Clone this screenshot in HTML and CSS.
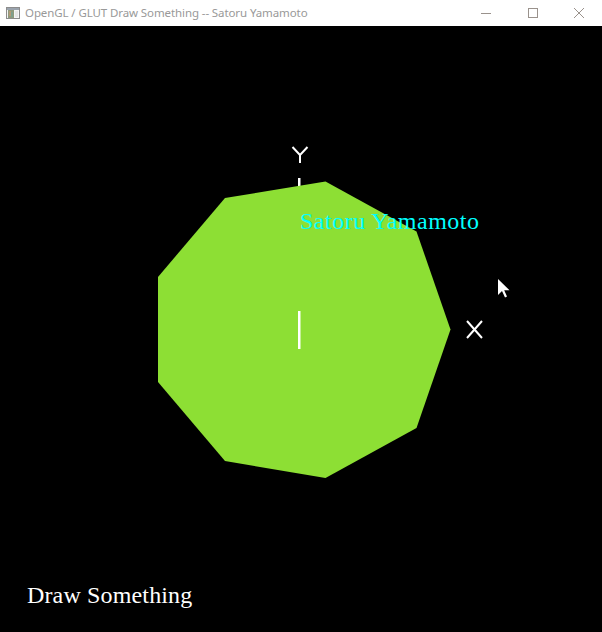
FILE: index.html
```html
<!DOCTYPE html>
<html>
<head>
<meta charset="utf-8">
<link rel="stylesheet" href="styles.css">
</head>
<body>
<div class="window">
  <div class="titlebar">
    <svg class="app-icon" width="14" height="12" viewBox="0 0 14 12">
      <rect x="0.5" y="0.5" width="13" height="11" fill="#f4f4f4" stroke="#8c8c8c"/>
      <rect x="1" y="1" width="12" height="2" fill="#9aa3ad"/>
      <rect x="2" y="3" width="6" height="8" fill="#8f9a7c"/>
      <rect x="3" y="4" width="2" height="5" fill="#b59a78"/>
      <rect x="5" y="5" width="2" height="5" fill="#7f9f8d"/>
      <rect x="9" y="4" width="3" height="6" fill="#e6e6e6"/>
    </svg>
    <span class="title">OpenGL / GLUT Draw Something -- Satoru Yamamoto</span>
    <div class="controls">
      <div class="ctl">
        <svg width="12" height="12" viewBox="0 0 12 12"><line x1="0" y1="6.5" x2="10" y2="6.5" stroke="#9a928c" stroke-width="1"/></svg>
      </div>
      <div class="ctl">
        <svg width="12" height="12" viewBox="0 0 12 12"><rect x="1.5" y="1.5" width="9" height="9" fill="none" stroke="#9a928c" stroke-width="1"/></svg>
      </div>
      <div class="ctl">
        <svg width="12" height="12" viewBox="0 0 12 12"><path d="M1 1 L11 11 M11 1 L1 11" stroke="#9a928c" stroke-width="1"/></svg>
      </div>
    </div>
  </div>
  <div class="canvas">
    <svg class="scene" width="602" height="606" viewBox="0 26 602 606">
      <rect x="298" y="178" width="2.5" height="150" fill="#ffffff"/>
      <polygon fill="#8ddf34" points="325.5,181.5 225,198 158,277 158,382 225,461 325.5,478 416.5,428 450.5,329.5 416.5,231.5"/>
      <rect x="298" y="311" width="2.5" height="38" fill="#ffffff"/>
      <path d="M292.5 147 L300 155 L307.5 147 M300 155 L300 163" stroke="#ffffff" stroke-width="2" fill="none"/>
      <path d="M467 321 L482 338 M482 321 L467 338" stroke="#ffffff" stroke-width="2" fill="none"/>
      <text class="label-name" x="300" y="229">Satoru Yamamoto</text>
      <text class="label-title" x="27" y="603">Draw Something</text>
      <path d="M498 279 L498 295 L502 291 L505 297.5 L507 296.5 L504.2 290.2 L509.5 290.2 Z" fill="#ffffff"/>
    </svg>
  </div>
</div>
</body>
</html>
```

FILE: styles.css
```css
html, body {
  margin: 0;
  padding: 0;
  background: #000000;
}

.window {
  width: 602px;
  height: 632px;
  display: flex;
  flex-direction: column;
  overflow: hidden;
}

.titlebar {
  height: 26px;
  background: #ffffff;
  display: flex;
  align-items: center;
  flex: none;
}

.app-icon {
  margin-left: 6px;
  margin-right: 5px;
  display: block;
}

.title {
  font-family: "Noto Sans", "Open Sans", sans-serif;
  font-size: 11.5px;
  color: #999999;
  white-space: nowrap;
  letter-spacing: -0.1px;
  line-height: 26px;
}

.controls {
  margin-left: auto;
  display: flex;
  height: 26px;
}

.ctl {
  width: 46px;
  height: 26px;
  display: flex;
  align-items: center;
  justify-content: center;
}

.ctl svg {
  display: block;
}

.canvas {
  flex: 1;
  background: #000000;
}

.scene {
  display: block;
}

.label-name {
  font-family: "Liberation Serif", serif;
  font-size: 24px;
  letter-spacing: 0.5px;
  fill: #00ffff;
}

.label-title {
  font-family: "Liberation Serif", serif;
  font-size: 24px;
  letter-spacing: 0.15px;
  fill: #ffffff;
}
```
